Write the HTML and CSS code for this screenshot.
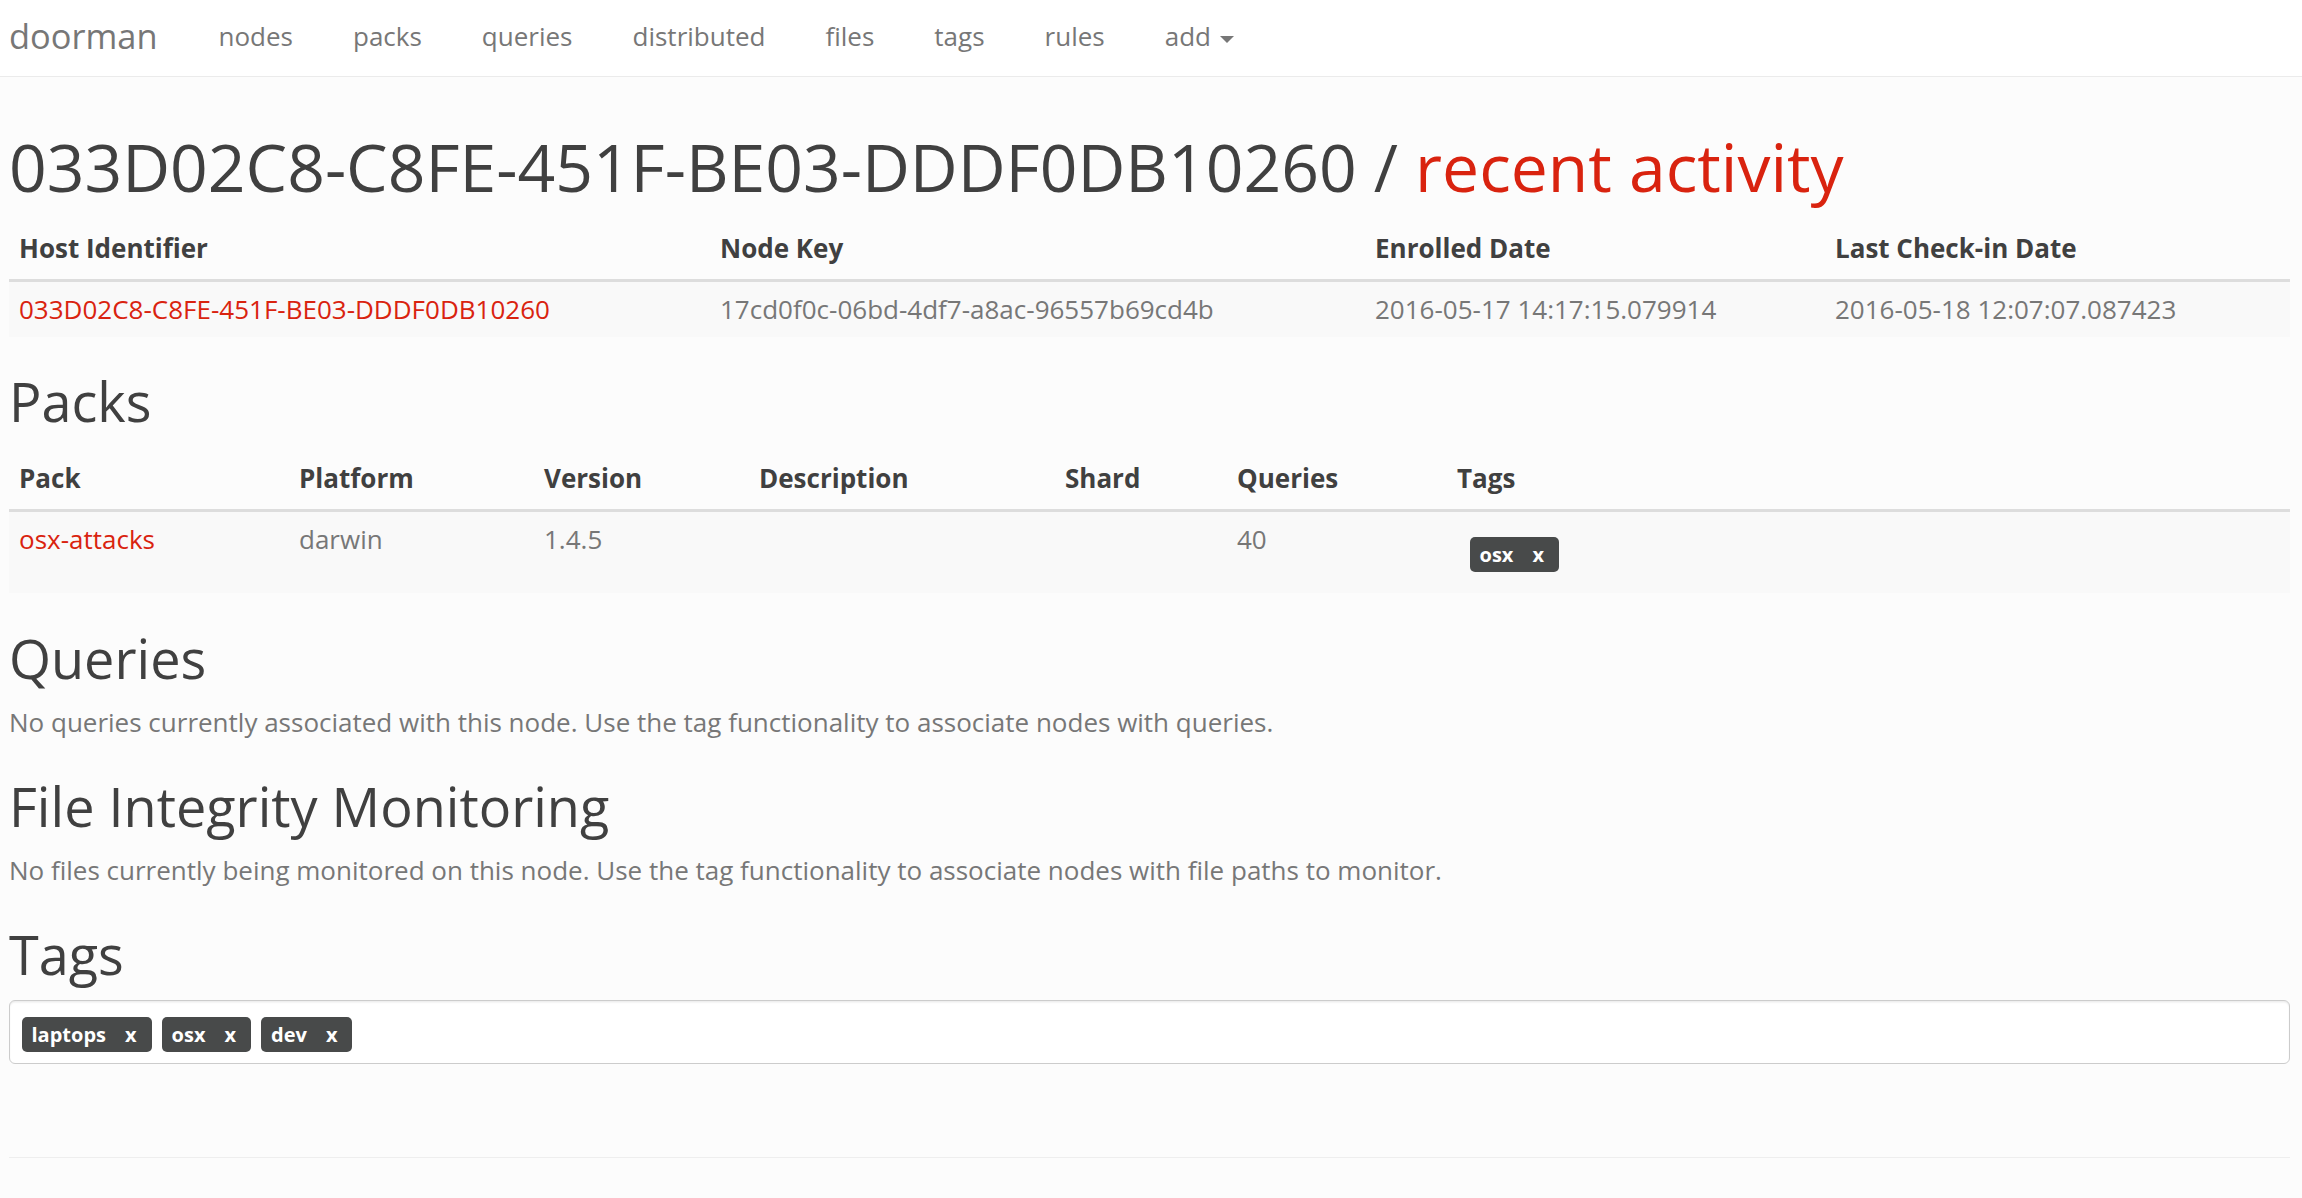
FILE: index.html
```html
<!DOCTYPE html>
<html lang="en">
<head>
<meta charset="utf-8">
<title>doorman</title>
<link rel="stylesheet" href="styles.css">
</head>
<body>
<nav class="navbar">
  <a class="brand" href="#">doorman</a>
  <ul class="nav">
    <li><a href="#">nodes</a></li>
    <li><a href="#">packs</a></li>
    <li><a href="#">queries</a></li>
    <li><a href="#">distributed</a></li>
    <li><a href="#">files</a></li>
    <li><a href="#">tags</a></li>
    <li><a href="#">rules</a></li>
    <li><a href="#">add <span class="caret"></span></a></li>
  </ul>
</nav>

<main class="page">
  <h1 class="title">033D02C8-C8FE-451F-BE03-DDDF0DB10260 / <span class="accent">recent activity</span></h1>

  <table class="table">
    <colgroup>
      <col class="w-host"><col class="w-key"><col class="w-enrolled"><col>
    </colgroup>
    <thead>
      <tr><th>Host Identifier</th><th>Node Key</th><th>Enrolled Date</th><th>Last Check-in Date</th></tr>
    </thead>
    <tbody>
      <tr>
        <td><a href="#">033D02C8-C8FE-451F-BE03-DDDF0DB10260</a></td>
        <td>17cd0f0c-06bd-4df7-a8ac-96557b69cd4b</td>
        <td>2016-05-17 14:17:15.079914</td>
        <td>2016-05-18 12:07:07.087423</td>
      </tr>
    </tbody>
  </table>

  <h2>Packs</h2>
  <table class="table">
    <colgroup>
      <col class="w-pack"><col class="w-platform"><col class="w-version"><col class="w-desc"><col class="w-shard"><col class="w-queries"><col>
    </colgroup>
    <thead>
      <tr><th>Pack</th><th>Platform</th><th>Version</th><th>Description</th><th>Shard</th><th>Queries</th><th>Tags</th></tr>
    </thead>
    <tbody>
      <tr>
        <td><a href="#">osx-attacks</a></td>
        <td>darwin</td>
        <td>1.4.5</td>
        <td></td>
        <td></td>
        <td>40</td>
        <td><div class="tags"><span class="tag">osx<span class="remove">x</span></span></div></td>
      </tr>
    </tbody>
  </table>

  <h2>Queries</h2>
  <p>No queries currently associated with this node. Use the tag functionality to associate nodes with queries.</p>

  <h2>File Integrity Monitoring</h2>
  <p>No files currently being monitored on this node. Use the tag functionality to associate nodes with file paths to monitor.</p>

  <h2>Tags</h2>
  <div class="tags boxed">
    <span class="tag">laptops<span class="remove">x</span></span>
    <span class="tag">osx<span class="remove">x</span></span>
    <span class="tag">dev<span class="remove">x</span></span>
  </div>

  <footer class="footer"></footer>
</main>
</body>
</html>
```

FILE: styles.css
```css
html, body {
  margin: 0;
  padding: 0;
}

body {
  background: #fcfcfc;
  font-family: "Open Sans", "Liberation Sans", sans-serif;
  font-size: 26px;
  line-height: 37.14px;
  color: #777777;
}

a {
  color: #d9230f;
  text-decoration: none;
}

/* navbar */
.navbar {
  display: flex;
  align-items: center;
  box-sizing: border-box;
  height: 76.5px;
  padding: 0 0 4px 9px;
  background: #ffffff;
  border-bottom: 1.5px solid #ebebeb;
}

.brand {
  font-size: 34.4px;
  line-height: 46px;
  color: #777777;
  margin-right: 31px;
}

.nav {
  display: flex;
  list-style: none;
  margin: 0;
  padding: 0;
}

.nav a {
  display: block;
  padding: 0 30px;
  color: #777777;
  font-size: 26px;
  line-height: 36px;
}

.caret {
  display: inline-block;
  width: 0;
  height: 0;
  margin-left: 2px;
  vertical-align: 3px;
  border-top: 7px solid #777777;
  border-left: 7px solid transparent;
  border-right: 7px solid transparent;
}

/* page */
.page {
  padding: 0 12.5px 0 9px;
}

h1, h2 {
  font-weight: 400;
  color: #404040;
  line-height: 1.1;
}

.title {
  font-size: 66px;
  margin: 53.5px 0 15px;
}

.accent {
  color: #d9230f;
}

h2 {
  font-size: 54px;
  margin: 35.5px 0 16px;
}

p {
  margin: 0;
}

/* tables */
.table {
  width: 100%;
  table-layout: fixed;
  border-collapse: collapse;
  border-spacing: 0;
}

.table th {
  text-align: left;
  font-weight: 700;
  color: #404040;
  padding: 12px 10px;
  vertical-align: bottom;
  border-bottom: 3px solid #dddddd;
}

.table td {
  padding: 9px 10px;
  vertical-align: top;
  border-top: 1px solid #dddddd;
  background: #f9f9f9;
}

.w-host { width: 701px; }
.w-key { width: 655px; }
.w-enrolled { width: 460px; }

.w-pack { width: 280px; }
.w-platform { width: 245px; }
.w-version { width: 215px; }
.w-desc { width: 306px; }
.w-shard { width: 172px; }
.w-queries { width: 220px; }

/* tags */
.tags {
  display: flex;
  gap: 10px;
  border: 1.5px solid transparent;
  padding: 15.5px 9px 11px 11.5px;
}

.tags.boxed {
  margin-top: 3px;
  background: #ffffff;
  border-color: #cccccc;
  border-radius: 6px;
  box-shadow: inset 0 1.5px 1.5px rgba(0, 0, 0, 0.075);
}

.tag {
  display: inline-block;
  background: #484a4a;
  color: #ffffff;
  font-size: 20px;
  font-weight: 700;
  line-height: 35px;
  padding: 0 12px 0 10px;
  border-radius: 5px;
}

.remove {
  margin-left: 16px;
  padding: 0 3px;
}

.footer {
  margin-top: 93.5px;
  border-top: 1.5px solid #eeeeee;
}
```
